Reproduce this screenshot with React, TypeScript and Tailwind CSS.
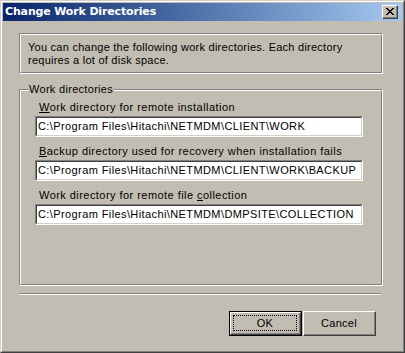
export default function App() {
  const ui = { fontFamily: '"Liberation Sans", Arial, sans-serif' };

  return (
    <div className="w-[405px] h-[353px] bg-[#c1bdb2] text-[11px] tracking-[0.3px] text-black" style={ui}>
      {/* window frame */}
      <div className="w-full h-full border border-t-[#d4d0c8] border-l-[#d4d0c8] border-r-[#404040] border-b-[#404040]">
        <div className="w-full h-full border border-t-white border-l-white border-r-[#808080] border-b-[#808080] p-px flex flex-col">
          {/* title bar */}
          <div className="h-[18px] flex items-center justify-between bg-gradient-to-r from-[#0a246a] to-[#a6caf0] pl-[2px]">
            <span className="text-white font-bold text-[11px] leading-[18px] tracking-[-0.15px]" style={{ fontFamily: '"DejaVu Sans", Verdana, sans-serif' }}>
              Change Work Directories
            </span>
            <div className="mr-[4px] w-[16px] h-[14px] border border-t-white border-l-white border-r-[#404040] border-b-[#404040] bg-[#c1bdb2]">
              <div className="w-full h-full border-r border-b border-[#808080] flex items-center justify-center">
                <svg width="8" height="7" viewBox="0 0 8 7" shapeRendering="crispEdges">
                  <path d="M0 0h2v1h-2zM6 0h2v1h-2zM1 1h2v1h-2zM5 1h2v1h-2zM2 2h4v1h-4zM3 3h2v1h-2zM2 4h4v1h-4zM1 5h2v1h-2zM5 5h2v1h-2zM0 6h2v1h-2zM6 6h2v1h-2z" fill="#000" />
                </svg>
              </div>
            </div>
          </div>

          {/* body */}
          <div className="flex-1 flex flex-col px-[16px]">
            {/* info box */}
            <div className="mt-[12px] w-[364px] h-[41px] border border-[#808080] border-r-white border-b-white">
              <div className="w-full h-full border border-white border-r-[#808080] border-b-[#808080] px-[7px] pt-[6px] leading-[13px] tracking-[0.25px]">
                <p>You can change the following work directories. Each directory</p>
                <p>requires a lot of disk space.</p>
              </div>
            </div>

            {/* group box */}
            <div className="relative mt-[15px] w-[364px] h-[197px] border border-[#808080] border-r-white border-b-white">
              <span className="absolute -top-[7px] left-[8px] px-px bg-[#c1bdb2] leading-[13px]">Work directories</span>
              <div className="w-full h-full border border-white border-r-[#808080] border-b-[#808080] pl-[14px] pt-[10px] flex flex-col gap-[8px]">
                <Field label={<><u>W</u>ork directory for remote installation</>} value="C:\Program Files\Hitachi\NETMDM\CLIENT\WORK" />
                <Field label={<><u>B</u>ackup directory used for recovery when installation fails</>} value="C:\Program Files\Hitachi\NETMDM\CLIENT\WORK\BACKUP" />
                <Field label={<>Work directory for remote file <u>c</u>ollection</>} value="C:\Program Files\Hitachi\NETMDM\DMPSITE\COLLECTION" />
              </div>
            </div>

            {/* separator */}
            <div className="mt-[7px] w-[362px] border-t border-b border-t-[#808080] border-b-white" />

            {/* buttons */}
            <div className="mt-[16px] flex pl-[210px]">
              <div className="w-[73px] h-[25px] border border-black">
                <Bevel>
                  <div className="w-full h-full p-[2px]">
                    <div className="w-full h-full border border-dotted border-black flex items-center justify-center">OK</div>
                  </div>
                </Bevel>
              </div>
              <div className="ml-px w-[73px] h-[25px]">
                <Bevel>
                  <div className="w-full h-full flex items-center justify-center">Cancel</div>
                </Bevel>
              </div>
            </div>
          </div>
        </div>
      </div>
    </div>
  );
}

function Bevel({ children }: { children: React.ReactNode }) {
  return (
    <div className="w-full h-full border border-t-white border-l-white border-r-[#404040] border-b-[#404040]">
      <div className="w-full h-full border-r border-b border-[#808080]">{children}</div>
    </div>
  );
}

function Field({ label, value }: { label: React.ReactNode; value: string }) {
  return (
    <div className="flex flex-col">
      <div className="pl-[4px] leading-[13px] tracking-[0.45px]">{label}</div>
      <div className="mt-[2px] w-[328px] h-[21px] border border-[#808080] border-r-white border-b-white">
        <div className="w-full h-full border border-[#404040] border-r-[#d4d0c8] border-b-[#d4d0c8] bg-white px-[1px] leading-[17px] tracking-[0.4px] whitespace-nowrap overflow-hidden">
          {value}
        </div>
      </div>
    </div>
  );
}
